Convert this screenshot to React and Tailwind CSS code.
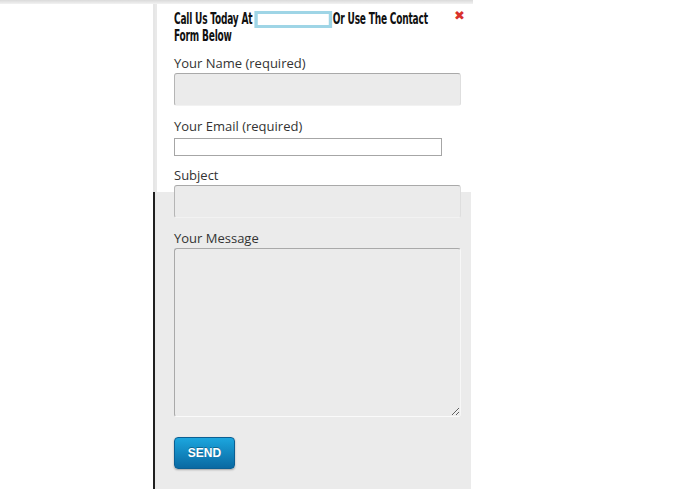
import React from "react";

function Label({ children }) {
  return (
    <div className="text-[13px] leading-[18px] text-[#333] font-['Open_Sans',sans-serif]">
      {children}
    </div>
  );
}

export default function App() {
  const grayInput =
    "block w-[287px] bg-[#ebebeb] rounded-[3px] border border-t-[#a9a9a9] border-l-[#b5b5b5] border-r-[#dedede] border-b-[#f2f2f2] outline-none";
  return (
    <div className="w-[676px] h-[497px] bg-white overflow-hidden">
      <div className="h-[4px] w-[473px] bg-gradient-to-b from-[#dadada] to-[#f2f2f2]" />
      <div className="ml-[153px] w-[318px] h-[485px] flex">
        <div className="w-[2px] bg-[linear-gradient(to_bottom,#e6e6e6_188px,#1f1f1f_188px)]" />
        <div className="flex-1 border-l-2 border-[#e9e9e9] bg-[linear-gradient(to_bottom,#ffffff_188px,#ebebeb_188px)] pl-[17px] pr-[10px] pt-[6px]">
          <div className="flex justify-between">
            <div className="w-[260px] h-[34px] pt-[1px]">
              <div className="w-[420px] origin-top-left scale-x-[0.67] font-['DejaVu_Sans_Condensed','DejaVu_Sans',sans-serif] font-bold text-[15px] leading-[17px] text-[#111] tracking-[-0.3px]">
                <span className="inline-block align-top">Call Us Today At</span>
                <span className="inline-block align-top w-[116px] h-[17px] border-y-[3px] border-x-[5px] border-[#9fd5e6] bg-white ml-[3px] mr-[1px]" />
                <span className="inline-block align-top">Or Use The Contact</span>
                <br />
                Form Below
              </div>
            </div>
            <div className="text-[#d9312b] font-bold text-[13px] leading-[13px] mr-[-4px] -mt-[1px] font-['DejaVu_Sans',sans-serif]">
              ✖
            </div>
          </div>
          <div className="mt-[10px]">
            <Label>Your Name (required)</Label>
          </div>
          <input readOnly className={grayInput + " h-[33px] mt-[1px]"} />
          <div className="mt-[11px]">
            <Label>Your Email (required)</Label>
          </div>
          <input
            readOnly
            className="block w-[268px] h-[18px] mt-[3px] bg-white border border-[#a6a6a6] outline-none"
          />
          <div className="mt-[10px]">
            <Label>Subject</Label>
          </div>
          <input readOnly className={grayInput + " h-[33px] mt-[1px]"} />
          <div className="mt-[11px]">
            <Label>Your Message</Label>
          </div>
          <textarea
            readOnly
            className="block w-[287px] h-[169px] mt-[1px] bg-[#ebebeb] rounded-[3px] border border-t-[#a9a9a9] border-l-[#a9a9a9] border-r-[#f7f7f7] border-b-[#fafafa] outline-none resize"
          />
          <button className="mt-[20px] w-[61px] h-[32px] rounded-[4px] border border-[#0b5f93] bg-gradient-to-b from-[#1ca6de] to-[#0a69a2] text-white font-bold text-[12px] font-['Liberation_Sans',Arial,sans-serif] shadow-[0_1px_2px_rgba(0,0,0,0.3)] [text-shadow:0_-1px_0_rgba(0,0,0,0.3)]">
            SEND
          </button>
        </div>
      </div>
    </div>
  );
}
